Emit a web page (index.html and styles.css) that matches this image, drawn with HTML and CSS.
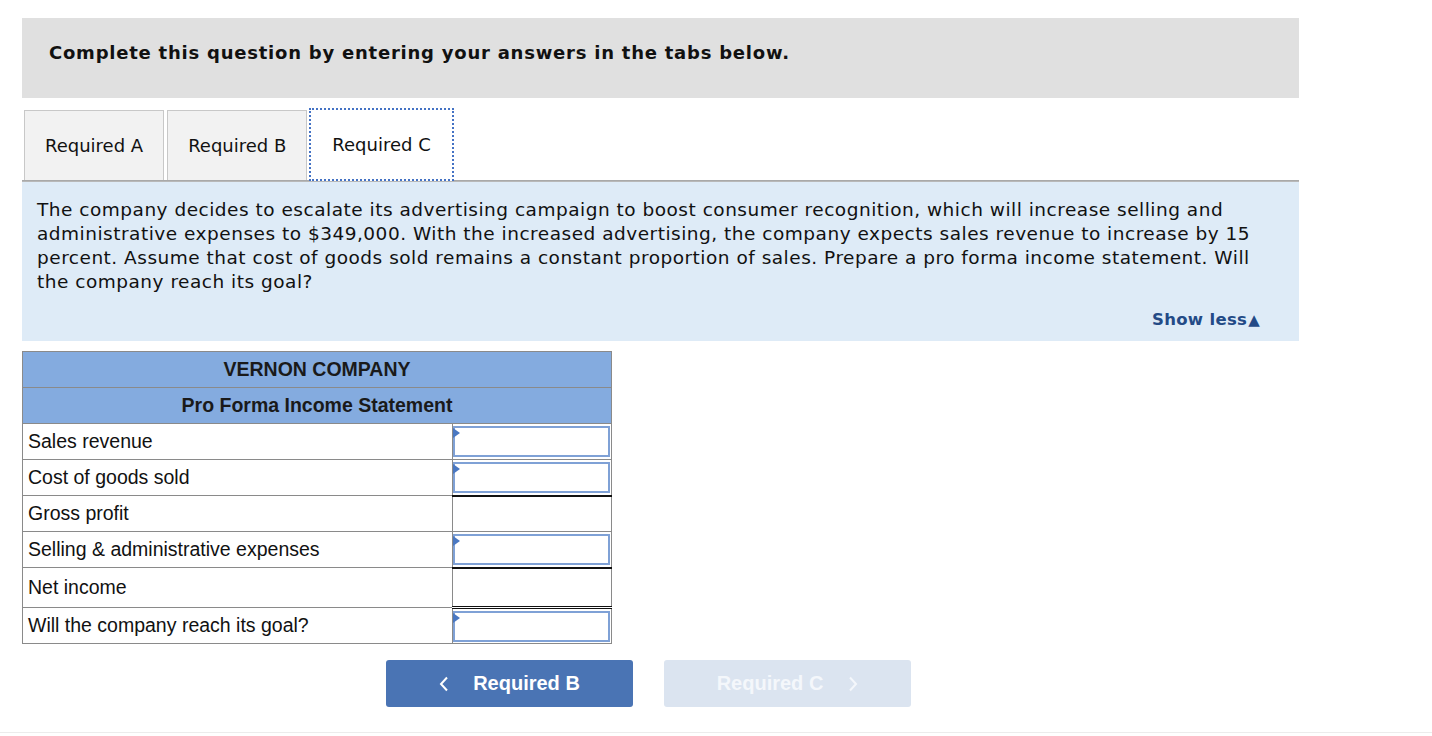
FILE: index.html
```html
<!DOCTYPE html>
<html>
<head>
<meta charset="utf-8">
<link rel="stylesheet" href="styles.css">
</head>
<body>
<div class="page">
  <div class="instr">Complete this question by entering your answers in the tabs below.</div>
  <div class="tabs">
    <div class="tab">Required A</div>
    <div class="tab">Required B</div>
    <div class="tab active">Required C</div>
  </div>
  <div class="panel">
    <p class="question">The company decides to escalate its advertising campaign to boost consumer recognition, which will increase selling and administrative expenses to $349,000. With the increased advertising, the company expects sales revenue to increase by 15 percent. Assume that cost of goods sold remains a constant proportion of sales. Prepare a pro forma income statement. Will the company reach its goal?</p>
    <div class="showless">Show less<span class="tri">▲</span></div>
  </div>
  <table class="stmt">
    <tr class="hdr"><td colspan="2">VERNON COMPANY</td></tr>
    <tr class="hdr"><td colspan="2">Pro Forma Income Statement</td></tr>
    <tr><td class="lbl">Sales revenue</td><td class="val"><div class="inp"><span class="flag"></span></div></td></tr>
    <tr><td class="lbl">Cost of goods sold</td><td class="val"><div class="inp"><span class="flag"></span></div></td></tr>
    <tr><td class="lbl">Gross profit</td><td class="val calc"></td></tr>
    <tr><td class="lbl">Selling &amp; administrative expenses</td><td class="val"><div class="inp"><span class="flag"></span></div></td></tr>
    <tr class="net"><td class="lbl">Net income</td><td class="val calc dbl"></td></tr>
    <tr><td class="lbl">Will the company reach its goal?</td><td class="val"><div class="inp"><span class="flag"></span></div></td></tr>
  </table>
  <div class="nav">
    <div class="btn prev"><svg class="chev" width="10" height="16" viewBox="0 0 10 16"><polyline points="8,1.5 2,8 8,14.5" fill="none" stroke="#fff" stroke-width="2"/></svg>Required B</div>
    <div class="btn next">Required C<svg class="chev r" width="10" height="16" viewBox="0 0 10 16"><polyline points="2,1.5 8,8 2,14.5" fill="none" stroke="#f4f7fb" stroke-width="2"/></svg></div>
  </div>
</div>
<div class="footline"></div>
</body>
</html>
```
FILE: styles.css
```css
html, body { margin: 0; padding: 0; background: #fff; }
body { font-family: "DejaVu Sans", Verdana, sans-serif; color: #111; }
.page { padding: 18px 0 0 22px; width: 1277px; height: 714px; box-sizing: content-box; }
.instr {
  background: #e0e0e0; height: 80px; box-sizing: border-box;
  padding: 24px 0 0 27px; font-weight: bold; font-size: 18px; letter-spacing: 0.77px; color: #111;
}
.tabs { display: flex; margin-top: 12px; padding-left: 2px; border-bottom: 1px solid #a9a9a9; height: 70px; }
.tab {
  background: #f2f2f2; border: 1px solid #c8c8c8; border-bottom: none;
  padding: 0 20px; height: 70px; box-sizing: border-box; margin-right: 3px;
  display: flex; align-items: center; font-size: 18px; color: #111;
}
.tab.active { background: #fff; border: 2px dotted #4472c4; margin-left: -1px; padding: 0 21px; height: 73px; margin-top: -2px; position: relative; z-index: 1; }
.panel { background: #deebf7; height: 160px; box-sizing: border-box; padding: 16px 15px 0 15px; border-top: 1px solid #b8b8b8; }
.question { margin: 0; font-size: 18.5px; letter-spacing: 0.5px; line-height: 24px; color: #111; width: 1240px; }
.showless { text-align: right; margin-top: 16px; padding-right: 24px; font-weight: bold; font-size: 16.5px; letter-spacing: 0.3px; color: #234a86; }
.tri { font-size: 15px; margin-left: 1px; }
.stmt { margin-top: 10px; border-collapse: collapse; width: 590px; font-family: "Liberation Sans", Arial, sans-serif; font-size: 19.5px; border: 1px solid #8a8a8a; }
.stmt td { padding: 0; border: 1px solid #8a8a8a; }
.hdr td { background: #84abdf; text-align: center; font-weight: bold; height: 35px; color: #1a1a1a; }
.lbl { width: 424px; padding-left: 5px !important; height: 35px; color: #111; }
.net .lbl { height: 39px; }
.val { width: 158px; padding: 0 !important; vertical-align: middle; }
.inp { position: relative; height: 31px; margin: 1px 1px 1px 0; border: 2px solid #7fa1d6; background: #fff; box-sizing: border-box; }
.flag { position: absolute; left: -2px; top: 0; width: 0; height: 0; border-top: 5px solid transparent; border-bottom: 5px solid transparent; border-left: 7px solid #4a78c2; }
.calc { border-top: 2px solid #111 !important; }
.dbl { border-bottom: 3px double #111 !important; }
.nav { display: flex; gap: 31px; margin-top: 16px; padding-left: 364px; }
.btn { width: 247px; height: 47px; border-radius: 3px; display: flex; align-items: center; justify-content: center; font-family: "Liberation Sans", Arial, sans-serif; font-weight: bold; font-size: 20px; color: #fff; box-sizing: border-box; }
.prev { background: #4a74b4; }
.next { background: #dbe4f0; color: #f4f7fb; }
.chev { margin-right: 24px; }
.chev.r { margin-right: 0; margin-left: 25px; }
.footline { height: 1px; background: #ececec; width: 100%; }
```
